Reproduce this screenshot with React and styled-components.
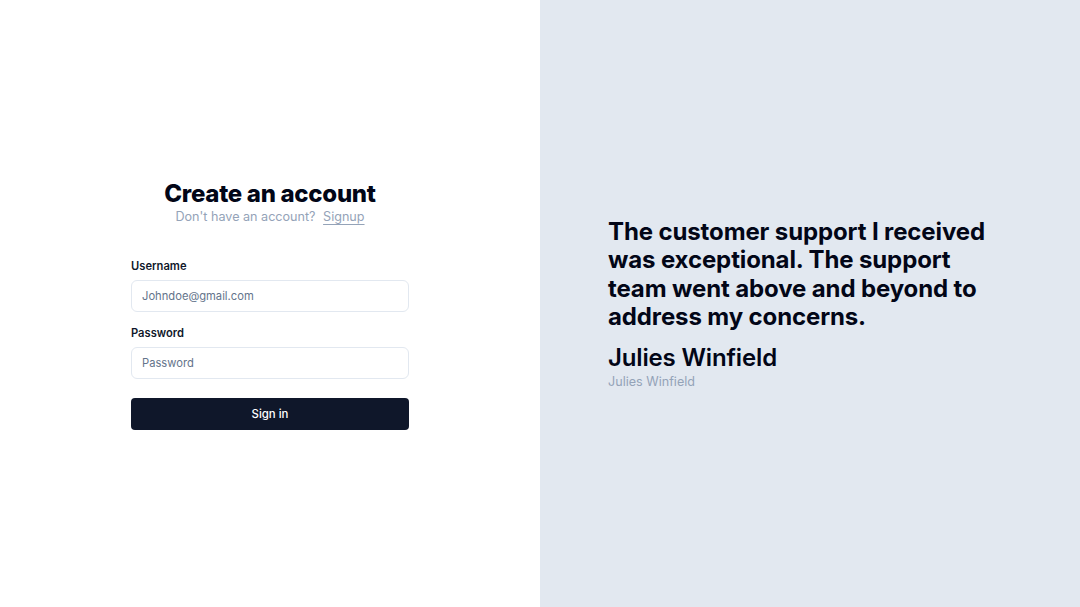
import React from 'react';
import styled, { createGlobalStyle } from 'styled-components';

const GlobalStyle = createGlobalStyle`
  html, body {
    margin: 0;
    padding: 0;
    font-family: Inter, "Noto Sans", sans-serif;
    color: #020617;
  }
  * { box-sizing: border-box; }
`;

const Page = styled.div`
  display: grid;
  grid-template-columns: 1fr 1fr;
  width: 100vw;
  height: 100vh;
`;

const FormSide = styled.section`
  display: flex;
  align-items: center;
  justify-content: center;
  background: #ffffff;
`;

const FormBox = styled.div`
  width: 278px;
  padding-top: 2px;
  display: flex;
  flex-direction: column;
`;

const Header = styled.div`
  display: flex;
  flex-direction: column;
  align-items: center;
  margin-bottom: 29px;
`;

const Title = styled.h1`
  margin: 0;
  font-size: 24px;
  line-height: 30px;
  font-weight: 800;
  letter-spacing: -0.3px;
  color: #020617;
`;

const Subtitle = styled.p`
  margin: -2px 0 0;
  font-size: 12.6px;
  line-height: 20px;
  color: #94a3b8;
`;

const SignupLink = styled.a`
  margin-left: 4px;
  color: #94a3b8;
  text-decoration: underline;
  text-underline-offset: 3px;
  cursor: pointer;
`;

const Field = styled.div`
  display: flex;
  flex-direction: column;
  margin-bottom: ${(p) => p.$gap || 11}px;
`;

const Label = styled.label`
  font-size: 11.2px;
  line-height: 20px;
  font-weight: 600;
  color: #0f172a;
  margin-bottom: 4px;
`;

const Input = styled.input`
  height: 32px;
  width: 100%;
  padding: 0 10px;
  border: 1px solid #e2e8f0;
  border-radius: 6px;
  font-family: inherit;
  font-size: 11.2px;
  color: #0f172a;
  outline: none;
  &::placeholder {
    color: #64748b;
  }
`;

const Button = styled.button`
  height: 32px;
  width: 100%;
  border: none;
  border-radius: 4px;
  background: #0f172a;
  color: #ffffff;
  font-family: inherit;
  font-size: 11.4px;
  font-weight: 500;
  cursor: pointer;
`;

const QuoteSide = styled.section`
  display: flex;
  align-items: center;
  background: #e2e8f0;
  padding: 3px 0 0 68px;
`;

const QuoteBox = styled.figure`
  margin: 0;
  max-width: 384px;
  display: flex;
  flex-direction: column;
`;

const Quote = styled.blockquote`
  margin: 0 0 13px;
  font-size: 24px;
  line-height: 28.4px;
  font-weight: 700;
  letter-spacing: -0.12px;
  color: #020617;
`;

const Author = styled.figcaption`
  font-size: 24px;
  line-height: 28px;
  font-weight: 600;
  letter-spacing: -0.15px;
  color: #020617;
`;

const Role = styled.span`
  font-size: 12.6px;
  line-height: 20px;
  color: #94a3b8;
`;

export default function App() {
  return (
    <>
      <GlobalStyle />
      <Page>
        <FormSide>
          <FormBox>
            <Header>
              <Title>Create an account</Title>
              <Subtitle>
                Don't have an account? <SignupLink>Signup</SignupLink>
              </Subtitle>
            </Header>
            <Field>
              <Label htmlFor="username">Username</Label>
              <Input id="username" placeholder="Johndoe@gmail.com" />
            </Field>
            <Field $gap={19}>
              <Label htmlFor="password">Password</Label>
              <Input id="password" type="password" placeholder="Password" />
            </Field>
            <Button>Sign in</Button>
          </FormBox>
        </FormSide>
        <QuoteSide>
          <QuoteBox>
            <Quote>
              The customer support I received was exceptional. The support team
              went above and beyond to address my concerns.
            </Quote>
            <Author>Julies Winfield</Author>
            <Role>Julies Winfield</Role>
          </QuoteBox>
        </QuoteSide>
      </Page>
    </>
  );
}
